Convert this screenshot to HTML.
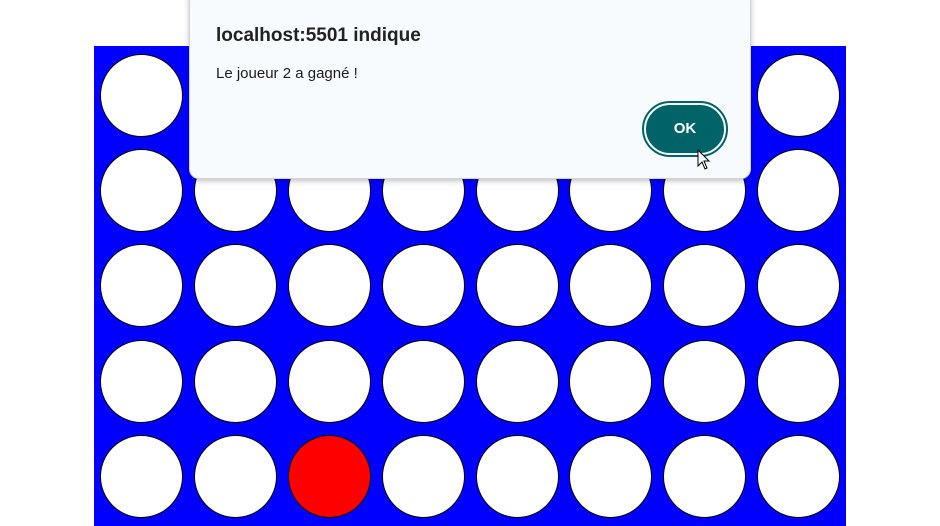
<!DOCTYPE html>
<html><head><meta charset="utf-8"><style>
html,body{margin:0;padding:0;width:940px;height:457px;overflow:hidden;background:#fff;font-family:"Segoe UI","Liberation Sans",sans-serif}
#board{position:absolute;left:94px;top:46px;width:752px;height:480px;background:#0000ff}
.c{position:absolute;width:81px;height:81px;border-radius:50%;background:#fff;border:1px solid #000}
.r{background:#f00}
#dlg{position:absolute;left:189px;top:-12px;width:560px;height:189px;background:#f7fbfd;border:1px solid #d0d4d6;border-radius:10px;box-shadow:0 2px 6px rgba(0,0,0,.25)}
#t{position:absolute;left:26px;top:36px;font-size:19px;font-weight:600;color:#222}
#m{position:absolute;left:26px;top:76px;font-size:15px;color:#1b1b1b}
#ok{position:absolute;left:454px;top:114px;width:78px;height:48px;border-radius:26px;background:#006367;border:2px solid #f7fbfd;outline:2px solid #006367;color:#fff;font-weight:700;font-size:15px;text-align:center;line-height:48px}
</style></head><body>
<div id="board"></div>
<div id="cells"></div>
<script>
var xs=[100,194,288,382,476,569,663,757],ys=[54,149,244,340,435],h='';
ys.forEach(function(y,ri){xs.forEach(function(x,ci){h+='<div class="c'+(ri==4&&ci==2?' r':'')+'" style="left:'+x+'px;top:'+y+'px"></div>';});});
document.getElementById('cells').innerHTML=h;
</script>
<div id="dlg"><div id="t">localhost:5501 indique</div><div id="m">Le joueur 2 a gagné !</div><div id="ok">OK</div></div>
<svg style="position:absolute;left:697px;top:149px" width="14" height="22" viewBox="0 0 14 22"><path d="M1 1 L1 17 L5 13 L8 20 L10 19 L7 12 L12 12 Z" fill="#fff" stroke="#000" stroke-width="1"/></svg>
</body></html>
